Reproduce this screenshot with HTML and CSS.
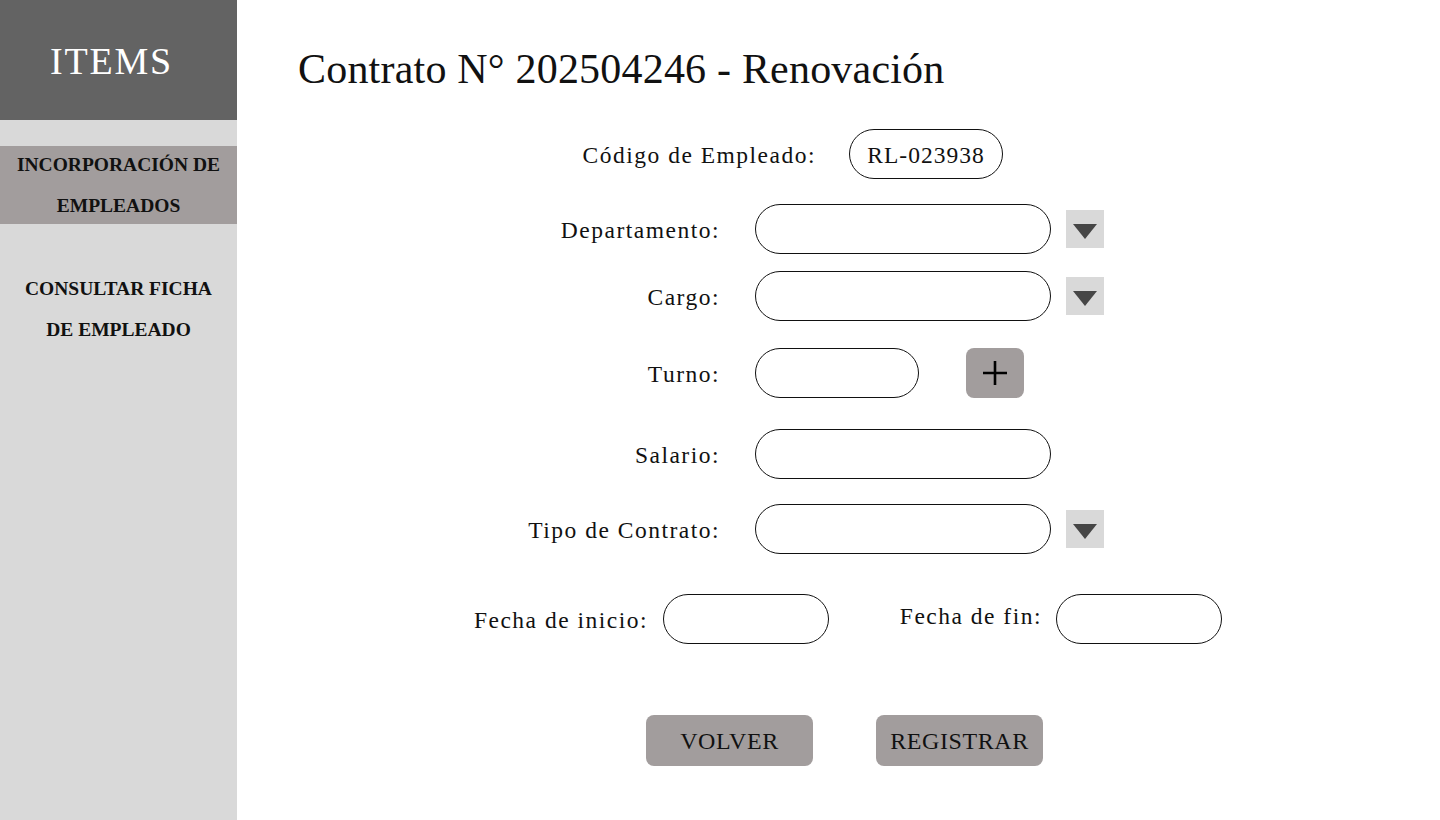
FILE: index.html
```html
<!DOCTYPE html>
<html lang="es">
<head>
<meta charset="utf-8">
<title>Contrato - Renovación</title>
<link rel="stylesheet" href="styles.css">
</head>
<body>
<div class="app">
  <aside class="sidebar">
    <div class="sidebar-head">ITEMS</div>
    <nav class="nav">
      <a class="nav-item active"><span>INCORPORACIÓN DE<br>EMPLEADOS</span></a>
      <a class="nav-item second"><span>CONSULTAR FICHA<br>DE EMPLEADO</span></a>
    </nav>
  </aside>
  <main class="main">
    <h1 class="title">Contrato N° 202504246 - Renovación</h1>
    <form class="form">
      <div class="row row-code">
        <label class="label label-code">Código de Empleado:</label>
        <div class="pill">RL-023938</div>
      </div>
      <div class="row row-depto">
        <label class="label">Departamento:</label>
        <div class="input"></div>
        <div class="drop"><svg width="24" height="15" viewBox="0 0 24 15"><path d="M0 0H24L12 15Z" fill="#464646"/></svg></div>
      </div>
      <div class="row row-cargo">
        <label class="label">Cargo:</label>
        <div class="input"></div>
        <div class="drop"><svg width="24" height="15" viewBox="0 0 24 15"><path d="M0 0H24L12 15Z" fill="#464646"/></svg></div>
      </div>
      <div class="row row-turno">
        <label class="label">Turno:</label>
        <div class="input input-short"></div>
        <div class="plus"><svg width="26" height="26" viewBox="0 0 26 26"><path d="M13 1V25M1 13H25" stroke="#000" stroke-width="2.6"/></svg></div>
      </div>
      <div class="row row-salario">
        <label class="label">Salario:</label>
        <div class="input"></div>
      </div>
      <div class="row row-tipo">
        <label class="label">Tipo de Contrato:</label>
        <div class="input"></div>
        <div class="drop"><svg width="24" height="15" viewBox="0 0 24 15"><path d="M0 0H24L12 15Z" fill="#464646"/></svg></div>
      </div>
      <div class="row row-fecha">
        <label class="label label-inicio">Fecha de inicio:</label>
        <div class="input input-date"></div>
        <label class="label label-fin">Fecha de fin:</label>
        <div class="input input-date"></div>
      </div>
      <div class="row row-actions">
        <button type="button" class="btn">VOLVER</button>
        <button type="button" class="btn">REGISTRAR</button>
      </div>
    </form>
  </main>
</div>
</body>
</html>
```

FILE: styles.css
```css
* { box-sizing: border-box; }
html, body { margin: 0; padding: 0; }
body {
  font-family: "Liberation Serif", "Times New Roman", serif;
  color: #111;
  background: #fff;
  width: 1440px;
  height: 820px;
  overflow: hidden;
}
.app {
  display: flex;
  height: 820px;
}
.sidebar {
  width: 237px;
  flex: 0 0 237px;
  background: #d9d9d9;
  display: flex;
  flex-direction: column;
}
.sidebar-head {
  height: 120px;
  background: #636363;
  color: #fff;
  font-size: 38px;
  letter-spacing: 1.8px;
  display: flex;
  align-items: center;
  justify-content: center;
  padding-right: 14px;
  padding-top: 2px;
}
.nav {
  display: flex;
  flex-direction: column;
  padding-top: 26px;
}
.nav-item {
  display: flex;
  flex-direction: column;
  justify-content: center;
  height: 78px;
  text-align: center;
  font-weight: bold;
  font-size: 19.5px;
  line-height: 41px;
  color: #111;
}
.nav-item span { display: block; }
.nav-item.active {
  background: #a29d9d;
}
.nav-item.second {
  margin-top: 46px;
}
.main {
  flex: 1;
  display: flex;
  flex-direction: column;
}
.title {
  margin: 45px 0 0 61px;
  font-size: 42px;
  font-weight: normal;
  line-height: 48px;
  letter-spacing: 0.2px;
}
.form {
  display: flex;
  flex-direction: column;
  margin-top: 3px;
}
.row {
  display: flex;
  align-items: center;
}
.label {
  width: 483px;
  margin-right: 35px;
  text-align: right;
  font-size: 23.5px;
  letter-spacing: 1.5px;
  white-space: nowrap;
  padding-top: 3px;
}
.row-code { margin-top: 33px; }
.label-code { width: 579px; margin-right: 33px; }
.pill {
  width: 154px;
  height: 50px;
  border: 1px solid #111;
  border-radius: 25px;
  display: flex;
  align-items: center;
  justify-content: center;
  font-size: 23.5px;
  letter-spacing: 1px;
  padding-top: 2px;
}
.input {
  width: 296px;
  height: 50px;
  border: 1px solid #111;
  border-radius: 25px;
  background: #fff;
}
.input-short { width: 164px; }
.input-date { width: 166px; }
.drop {
  width: 38px;
  height: 38px;
  margin-left: 15px;
  background: #d9d9d9;
  display: flex;
  justify-content: center;
  align-items: flex-start;
  padding-top: 14px;
}
.drop svg { display: block; }
.plus {
  width: 58px;
  height: 50px;
  margin-left: 47px;
  background: #a29d9d;
  border-radius: 8px;
  display: flex;
  align-items: center;
  justify-content: center;
}
.plus svg { display: block; }
.row-depto { margin-top: 25px; }
.row-cargo { margin-top: 17px; }
.row-turno { margin-top: 27px; }
.row-salario { margin-top: 31px; }
.row-tipo { margin-top: 25px; }
.row-fecha { margin-top: 40px; }
.label-inicio { width: 411px; margin-right: 15px; }
.label-fin { width: 213px; margin-right: 14px; margin-bottom: 8px; }
.row-actions {
  margin-top: 71px;
  padding-left: 409px;
  gap: 63px;
}
.btn {
  width: 167px;
  height: 51px;
  border: none;
  border-radius: 8px;
  background: #a29d9d;
  font-family: "Liberation Serif", "Times New Roman", serif;
  font-size: 24px;
  letter-spacing: 0.6px;
  color: #111;
  padding: 0;
  padding-top: 2px;
}
```
